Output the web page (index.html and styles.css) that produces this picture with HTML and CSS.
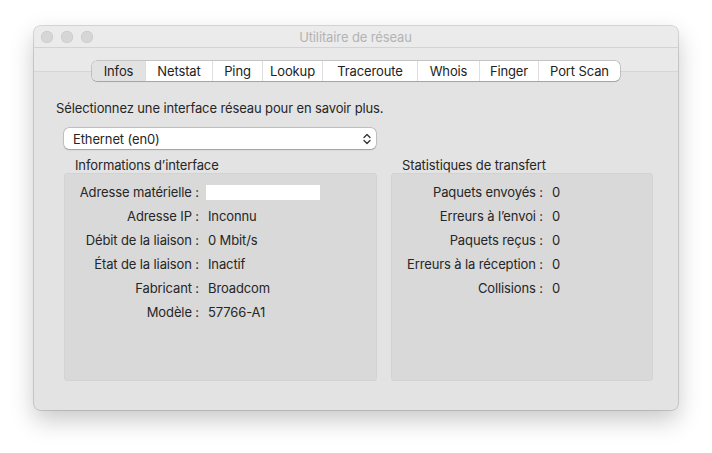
FILE: index.html
```html
<!DOCTYPE html>
<html lang="fr">
<head>
<meta charset="utf-8">
<title>Utilitaire de réseau</title>
<link rel="stylesheet" href="styles.css">
</head>
<body>
<div class="window">
  <div class="titlebar">
    <div class="lights">
      <span class="light"></span><span class="light"></span><span class="light"></span>
    </div>
    <div class="title">Utilitaire de réseau</div>
  </div>
  <div class="tabstrip">
    <div class="tabs">
      <div class="tab sel w-infos">Infos</div>
      <div class="tab w-netstat">Netstat</div>
      <div class="tab w-ping">Ping</div>
      <div class="tab w-lookup">Lookup</div>
      <div class="tab w-trace">Traceroute</div>
      <div class="tab w-whois">Whois</div>
      <div class="tab w-finger">Finger</div>
      <div class="tab w-port">Port Scan</div>
    </div>
  </div>
  <div class="content">
    <p class="intro">Sélectionnez une interface réseau pour en savoir plus.</p>
    <div class="popup">
      <span>Ethernet (en0)</span>
      <svg class="chev" width="8" height="12" viewBox="0 0 8 12"><path d="M1 4.5 L4 1.5 L7 4.5 M1 7.5 L4 10.5 L7 7.5" fill="none" stroke="#333" stroke-width="1.3" stroke-linecap="round" stroke-linejoin="round"/></svg>
    </div>
    <div class="groups">
      <div class="group left">
        <div class="glabel">Informations d’interface</div>
        <div class="gbox">
          <div class="row"><span class="k">Adresse matérielle :</span><span class="v"><span class="field"></span></span></div>
          <div class="row"><span class="k">Adresse IP :</span><span class="v">Inconnu</span></div>
          <div class="row"><span class="k">Débit de la liaison :</span><span class="v">0 Mbit/s</span></div>
          <div class="row"><span class="k">État de la liaison :</span><span class="v">Inactif</span></div>
          <div class="row"><span class="k">Fabricant :</span><span class="v">Broadcom</span></div>
          <div class="row"><span class="k">Modèle :</span><span class="v">57766-A1</span></div>
        </div>
      </div>
      <div class="group right">
        <div class="glabel">Statistiques de transfert</div>
        <div class="gbox">
          <div class="row"><span class="k">Paquets envoyés :</span><span class="v">0</span></div>
          <div class="row"><span class="k">Erreurs à l’envoi :</span><span class="v">0</span></div>
          <div class="row"><span class="k">Paquets reçus :</span><span class="v">0</span></div>
          <div class="row"><span class="k">Erreurs à la réception :</span><span class="v">0</span></div>
          <div class="row"><span class="k">Collisions :</span><span class="v">0</span></div>
        </div>
      </div>
    </div>
  </div>
</div>
</body>
</html>
```
FILE: styles.css
```css
* { box-sizing: border-box; }
html, body { margin: 0; }
body {
  background: #ffffff;
  padding: 26px 0 0 34px;
  font-family: Inter, "Noto Sans", "Liberation Sans", sans-serif;
  font-size: 13px;
  letter-spacing: -0.12px;
  color: #262626;
  width: 712px;
  height: 453px;
  overflow: hidden;
}
.window {
  width: 644px;
  height: 384px;
  background: #e3e3e3;
  border-radius: 6px;
  box-shadow: 0 0 0 0.5px rgba(0,0,0,0.28), 0 10px 24px rgba(0,0,0,0.22);
  display: flex;
  flex-direction: column;
  overflow: hidden;
}
.titlebar {
  height: 22px;
  background: #ebebeb;
  border-bottom: 1px solid #d3d3d3;
  display: flex;
  align-items: center;
}
.lights {
  display: flex;
  gap: 8px;
  padding-left: 7px;
}
.light {
  width: 12px;
  height: 12px;
  border-radius: 50%;
  background: #d6d6d6;
  box-shadow: inset 0 0 0 0.5px #c4c4c4;
}
.title {
  flex: 1;
  text-align: center;
  color: #b3b3b3;
  margin-right: 60px;
  font-size: 13px;
}
.tabstrip {
  padding-top: 13px;
  display: flex;
  justify-content: center;
  background: linear-gradient(to bottom, #e9e9e9 0, #e9e9e9 23px, #d6d6d6 23px, #d6d6d6 24px, #e3e3e3 24px);
}
.tabs {
  display: flex;
  height: 20px;
  background: #fff;
  border-radius: 5px;
  box-shadow: 0 0 0 0.5px rgba(0,0,0,0.3), 0 0.5px 1px rgba(0,0,0,0.15);
  overflow: hidden;
}
.tab {
  display: flex;
  align-items: center;
  justify-content: center;
  border-left: 1px solid #dedede;
  color: #222;
  line-height: 20px;
}
.tab:first-child { border-left: none; }
.tab.sel { background: #e2e2e2; }
.w-infos { width: 53px; }
.w-netstat { width: 67px; }
.w-ping { width: 50px; }
.w-lookup { width: 60px; }
.w-trace { width: 95px; }
.w-whois { width: 62px; }
.w-finger { width: 59px; }
.w-port { width: 82px; }

.content {
  padding: 19px 25px 0 22px;
  flex: 1;
}
.intro {
  margin: 0;
  line-height: 16px;
  color: #262626;
}
.popup {
  margin: 12px 0 0 8px;
  width: 312px;
  height: 21px;
  background: #fff;
  border-radius: 5px;
  box-shadow: 0 0 0 0.5px rgba(0,0,0,0.25), 0 0.5px 1.5px rgba(0,0,0,0.2);
  display: flex;
  align-items: center;
  justify-content: space-between;
  padding: 0 5px 0 9px;
}
.chev { display: block; }
.groups {
  display: flex;
  gap: 14px;
  margin: 7px 0 0 8px;
}
.group.left { width: 313px; }
.group.right { width: 262px; }
.glabel {
  padding: 1px 0 0 11px;
  line-height: 16px;
  height: 17px;
  color: #262626;
}
.gbox {
  height: 208px;
  background: #d9d9d9;
  border-radius: 4px;
  box-shadow: inset 0 0 0 0.5px rgba(0,0,0,0.06);
  padding-top: 7px;
}
.row {
  display: grid;
  column-gap: 9px;
  line-height: 24px;
  height: 24px;
}
.left .row { grid-template-columns: 135px 1fr; }
.right .row { grid-template-columns: 152px 1fr; }
.k { text-align: right; white-space: nowrap; }
.v { white-space: nowrap; display: flex; align-items: center; }
.field {
  display: block;
  width: 114px;
  height: 15px;
  background: #fff;
  margin-left: -2px;
}
```
